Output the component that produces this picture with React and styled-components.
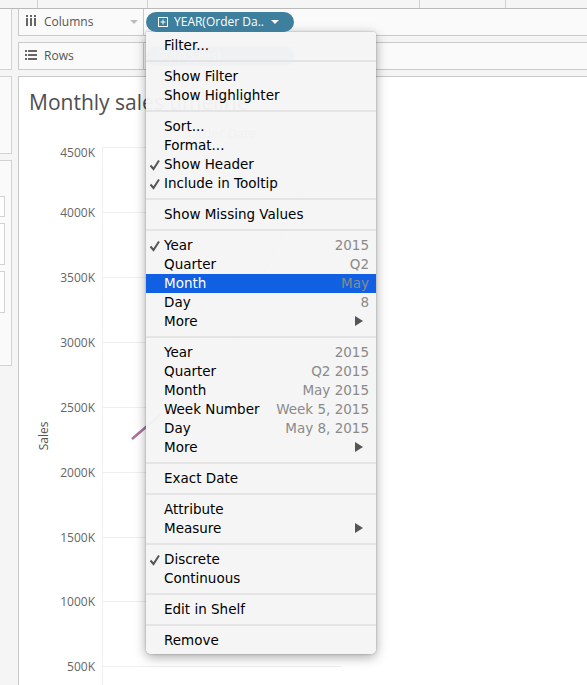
import styled, { createGlobalStyle } from "styled-components";

const GlobalStyle = createGlobalStyle`
  html, body {
    margin: 0;
    height: 685px;
    overflow: hidden;
    background: #f5f5f5;
  }
`;

const Page = styled.div`
  position: relative;
  width: 587px;
  height: 685px;
  overflow: hidden;
  font-family: "Open Sans", sans-serif;
  background: #f5f5f5;
`;

const TopStrip = styled.div`
  height: 8px;
  border-bottom: 1px solid #b9b9b9;
  display: flex;
  box-sizing: content-box;
`;

const StripCell = styled.div`
  width: ${(p) => p.$w}px;
  border-right: 1px solid #cfcfcf;
  box-sizing: border-box;
`;

const Body = styled.div`
  display: flex;
  height: 676px;
`;

const Rail = styled.div`
  width: 12px;
  margin-right: 6px;
  display: flex;
  flex-direction: column;
  gap: 6px;
  flex: none;
`;

const RailPanel = styled.div`
  height: ${(p) => p.$h}px;
  background: #fafafa;
  border: 1px solid #d2d2d2;
  border-left: none;
  border-top: ${(p) => (p.$flush ? "none" : "1px solid #d2d2d2")};
  box-sizing: border-box;
  display: flex;
  flex-direction: column;
  gap: 6px;
  padding-top: ${(p) => p.$pad || 0}px;
`;

const RailField = styled.div`
  width: 5px;
  height: ${(p) => p.$h}px;
  background: #fff;
  border: 1px solid #d2d2d2;
  border-left: none;
  box-sizing: border-box;
`;

const Main = styled.div`
  flex: 1;
  display: flex;
  flex-direction: column;
  min-width: 0;
`;

const Shelf = styled.div`
  display: flex;
  height: 26px;
  margin-bottom: 6px;
  background: #fafafa;
  border-bottom: 1px solid #c9c9c9;
  border-top: ${(p) => (p.$top ? "1px solid #c9c9c9" : "none")};
  box-sizing: content-box;
`;

const ShelfLabel = styled.div`
  width: 126px;
  display: flex;
  align-items: center;
  gap: 7px;
  padding: 0 0 2px 6px;
  box-sizing: border-box;
  border-left: 1px solid #c9c9c9;
  border-right: 1px solid #c9c9c9;
  font-size: 12px;
  color: #555;
  position: relative;
`;

const ShelfIcon = styled.span`
  width: 12px;
  display: flex;
  justify-content: flex-end;
`;

const ShelfCaret = styled.span`
  position: absolute;
  right: 5px;
  top: 11px;
  width: 0;
  height: 0;
  border-left: 4px solid transparent;
  border-right: 4px solid transparent;
  border-top: 4px solid #bdbdbd;
`;

const PillSlot = styled.div`
  flex: 1;
  padding: 3px 0 0 2px;
`;

const Pill = styled.div`
  position: relative;
  z-index: 2;
  width: 148px;
  height: 20px;
  border-radius: 10px;
  background: #3d7f9c;
  color: #fff;
  display: flex;
  align-items: center;
  gap: 6px;
  padding: 0 0 1px 12px;
  box-sizing: border-box;
  font-size: 12px;
  white-space: nowrap;
`;

const PillCaret = styled.span`
  margin-left: 1px;
  width: 0;
  height: 0;
  border-left: 4px solid transparent;
  border-right: 4px solid transparent;
  border-top: 4px solid #fff;
`;

const ShadedPill = styled(Pill)`
  z-index: 0;
`;

const ChartArea = styled.div`
  flex: 1;
  background: #fff;
  border-top: 1px solid #c9c9c9;
  border-left: 1px solid #c9c9c9;
`;

const ChartTitle = styled.h1`
  margin: 0;
  padding: 11px 0 0 10px;
  font-size: 21px;
  line-height: 28px;
  font-weight: 400;
  color: #4e4e4e;
  white-space: nowrap;
`;

const ChartSvg = styled.svg`
  display: block;
  margin-left: -19px;
  font-family: "Open Sans", sans-serif;
`;

const Menu = styled.div`
  position: absolute;
  z-index: 1;
  left: 146px;
  top: 32px;
  width: 230px;
  padding: 3.5px 0 4.5px;
  box-sizing: border-box;
  background: rgba(245, 245, 245, 0.97);
  border-radius: 0 3px 5px 5px;
  box-shadow: 0 3px 12px rgba(0, 0, 0, 0.35), 0 0 2px rgba(0, 0, 0, 0.3);
  font-family: "DejaVu Sans", sans-serif;
  font-size: 13.5px;
  color: #000;
`;

const MenuSeparator = styled.div`
  height: 2px;
  margin: 5px 0;
  background: #e4e4e4;
`;

const MenuRow = styled.div`
  position: relative;
  height: 19px;
  display: flex;
  align-items: center;
  justify-content: space-between;
  padding: 0 7px 0 18px;
  background: ${(p) => (p.$active ? "#1160e3" : "transparent")};
  color: ${(p) => (p.$active ? "#fff" : "#000")};
  white-space: nowrap;
`;

const MenuValue = styled.span`
  color: #8a8a8a;
`;

const Check = styled.svg`
  position: absolute;
  left: 3px;
  top: 4px;
`;

const Arrow = styled.span`
  margin-right: 6px;
  width: 0;
  height: 0;
  border-top: 5px solid transparent;
  border-bottom: 5px solid transparent;
  border-left: 8px solid #555;
`;

const ticks = [
  ["4500K", 147, 5],
  ["4000K", 212, 0],
  ["3500K", 277, 0],
  ["3000K", 342, 0],
  ["2500K", 407, 0],
  ["2000K", 472, 0],
  ["1500K", 537, 0],
  ["1000K", 601, 0],
  ["500K", 666, 0],
];

const menuGroups = [
  [{ label: "Filter..." }],
  [{ label: "Show Filter" }, { label: "Show Highlighter" }],
  [
    { label: "Sort..." },
    { label: "Format..." },
    { label: "Show Header", checked: true },
    { label: "Include in Tooltip", checked: true },
  ],
  [{ label: "Show Missing Values" }],
  [
    { label: "Year", value: "2015", checked: true },
    { label: "Quarter", value: "Q2" },
    { label: "Month", value: "May", active: true },
    { label: "Day", value: "8" },
    { label: "More", more: true },
  ],
  [
    { label: "Year", value: "2015" },
    { label: "Quarter", value: "Q2 2015" },
    { label: "Month", value: "May 2015" },
    { label: "Week Number", value: "Week 5, 2015" },
    { label: "Day", value: "May 8, 2015" },
    { label: "More", more: true },
  ],
  [{ label: "Exact Date" }],
  [{ label: "Attribute" }, { label: "Measure", more: true }],
  [{ label: "Discrete", checked: true }, { label: "Continuous" }],
  [{ label: "Edit in Shelf" }],
  [{ label: "Remove" }],
];

function ColumnsIcon() {
  return (
    <svg width="11" height="12" viewBox="0 0 11 12" fill="#666">
      <rect x="0" y="0" width="2" height="2" />
      <rect x="4" y="0" width="2" height="2" />
      <rect x="8" y="0" width="2" height="2" />
      <rect x="0" y="3" width="2" height="8" />
      <rect x="4" y="3" width="2" height="8" />
      <rect x="8" y="3" width="2" height="8" />
    </svg>
  );
}

function RowsIcon() {
  return (
    <svg width="12" height="10" viewBox="0 0 12 10" fill="#666">
      <rect x="0" y="0" width="2" height="2" />
      <rect x="0" y="4" width="2" height="2" />
      <rect x="0" y="8" width="2" height="2" />
      <rect x="3" y="0" width="9" height="2" />
      <rect x="3" y="4" width="9" height="2" />
      <rect x="3" y="8" width="9" height="2" />
    </svg>
  );
}

function PlusBox() {
  return (
    <svg width="10" height="10" viewBox="0 0 10 10" fill="none" stroke="#fff" strokeWidth="1">
      <rect x="0.5" y="0.5" width="9" height="9" />
      <path d="M5 2.5v5M2.5 5h5" />
    </svg>
  );
}

function MenuItem({ item }) {
  return (
    <MenuRow $active={item.active}>
      {item.checked && (
        <Check width="12" height="12" viewBox="0 0 12 12" fill="none" stroke="#555" strokeWidth="2">
          <path d="M1.5 6.5 L4.5 10 L10 1.5" />
        </Check>
      )}
      <span>{item.label}</span>
      {item.value && <MenuValue>{item.value}</MenuValue>}
      {item.more && <Arrow />}
    </MenuRow>
  );
}

export default function App() {
  return (
    <Page>
      <GlobalStyle />
      <TopStrip>
        <StripCell $w={38} />
        <StripCell $w={110} />
        <StripCell $w={272} />
        <StripCell $w={86} />
      </TopStrip>
      <Body>
        <Rail>
          <RailPanel $h={61} $flush />
          <RailPanel $h={78} />
          <RailPanel $h={206} $pad={35}>
            <RailField $h={21} />
            <RailField $h={42} />
            <RailField $h={42} />
          </RailPanel>
        </Rail>
        <Main>
          <Shelf>
            <ShelfLabel>
              <ShelfIcon>
                <ColumnsIcon />
              </ShelfIcon>
              Columns
              <ShelfCaret />
            </ShelfLabel>
            <PillSlot>
              <Pill>
                <PlusBox />
                YEAR(Order Da..
                <PillCaret />
              </Pill>
            </PillSlot>
          </Shelf>
          <Shelf $top>
            <ShelfLabel>
              <ShelfIcon>
                <RowsIcon />
              </ShelfIcon>
              Rows
            </ShelfLabel>
            <PillSlot>
              <ShadedPill>SUM(Sales)</ShadedPill>
            </PillSlot>
          </Shelf>
          <ChartArea>
            <ChartTitle>Monthly sales timeline</ChartTitle>
            <ChartSvg width="569" height="569" viewBox="0 116 569 569">
              <line x1="102.5" y1="147" x2="102.5" y2="685" stroke="#f0f0f0" />
              <text x="222" y="138" textAnchor="middle" fontSize="13" fill="#777">
                Order Date
              </text>
              {ticks.map(([label, y, shift]) => (
                <g key={label}>
                  <line x1="102" y1={y + 0.5} x2="341" y2={y + 0.5} stroke="#efefef" />
                  <text x="95" y={y + 5 + shift} textAnchor="end" fontSize="12" fill="#666">
                    {label}
                  </text>
                </g>
              ))}
              <text
                transform="translate(48 436) rotate(-90)"
                textAnchor="middle"
                fontSize="12"
                fill="#555"
              >
                Sales
              </text>
              <path d="M132 439 L160 415" stroke="#a9739c" strokeWidth="2.5" fill="none" />
              <path d="M232 340 L310 175" stroke="#dcdcdc" strokeWidth="2" fill="none" />
            </ChartSvg>
          </ChartArea>
        </Main>
      </Body>
      <Menu>
        {menuGroups.map((group, i) => (
          <div key={i}>
            {i > 0 && <MenuSeparator />}
            {group.map((item, j) => (
              <MenuItem key={j} item={item} />
            ))}
          </div>
        ))}
      </Menu>
    </Page>
  );
}
